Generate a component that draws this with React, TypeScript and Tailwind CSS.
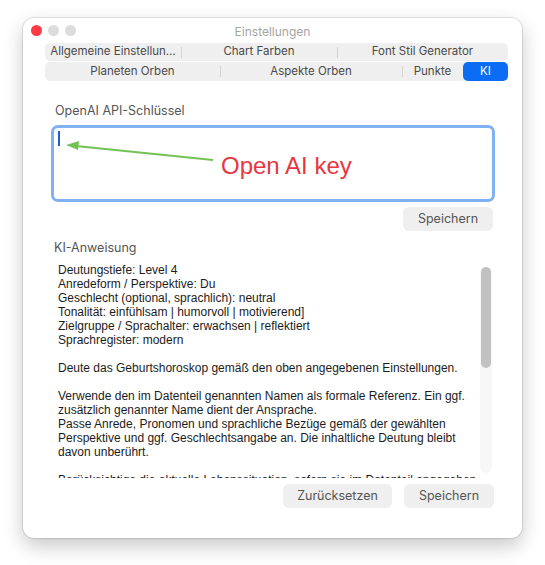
import React from "react";

const sys = "font-['Inter','Noto_Sans',sans-serif]";

function Seg({ w, label, divider, selected }: { w: number; label: string; divider?: boolean; selected?: boolean }) {
  return (
    <div className="relative flex items-center justify-center h-full" style={{ width: w }}>
      {divider && <span className="absolute left-0 top-[4px] h-[11px] w-px bg-[#d4d4d4]" />}
      {selected ? (
        <div className="w-full h-full rounded-[5px] bg-[#0b6cf4] text-white flex items-center justify-center">{label}</div>
      ) : (
        <span className="text-[#4a4a4a]">{label}</span>
      )}
    </div>
  );
}

const lines: string[] = [
  "Deutungstiefe: Level 4",
  "Anredeform / Perspektive: Du",
  "Geschlecht (optional, sprachlich): neutral",
  "Tonalität: einfühlsam | humorvoll | motivierend]",
  "Zielgruppe / Sprachalter: erwachsen | reflektiert",
  "Sprachregister: modern",
  "",
  "Deute das Geburtshoroskop gemäß den oben angegebenen Einstellungen.",
  "",
  "Verwende den im Datenteil genannten Namen als formale Referenz. Ein ggf.",
  "zusätzlich genannter Name dient der Ansprache.",
  "Passe Anrede, Pronomen und sprachliche Bezüge gemäß der gewählten",
  "Perspektive und ggf. Geschlechtsangabe an. Die inhaltliche Deutung bleibt",
  "davon unberührt.",
  "",
  "Berücksichtige die aktuelle Lebenssituation, sofern sie im Datenteil angegeben ist.",
];

export default function App() {
  return (
    <div className={`w-[545px] h-[565px] bg-white pt-[18px] pl-[23px] ${sys}`}>
      <div className="w-[499px] h-[520px] rounded-[11px] bg-white shadow-[0_0_0_1px_rgba(0,0,0,0.10),0_8px_20px_rgba(0,0,0,0.22)] flex flex-col overflow-hidden">
        {/* title bar */}
        <div className="h-[25px] grid grid-cols-[1fr_auto_1fr] items-center">
          <div className="flex items-center gap-[6px] pl-[8px]">
            <span className="w-[11px] h-[11px] rounded-full bg-[#fe3b45]" />
            <span className="w-[11px] h-[11px] rounded-full bg-[#dcdcdc]" />
            <span className="w-[11px] h-[11px] rounded-full bg-[#dcdcdc]" />
          </div>
          <div className="text-[12px] text-[#a5a5a5] pt-[2px]">Einstellungen</div>
          <div />
        </div>

        {/* tabs */}
        <div className="ml-[22px] w-[463px] flex flex-col gap-px text-[11.5px]">
          <div className="h-[18px] flex rounded-[5px] bg-[#efefef]">
            <Seg w={136} label="Allgemeine Einstellun…" />
            <Seg w={156} label="Chart Farben" divider />
            <Seg w={171} label="Font Stil Generator" divider />
          </div>
          <div className="h-[19px] flex rounded-[5px] bg-[#efefef]">
            <Seg w={175} label="Planeten Orben" />
            <Seg w={182} label="Aspekte Orben" divider />
            <Seg w={61} label="Punkte" divider />
            <Seg w={45} label="KI" selected />
          </div>
        </div>

        {/* content */}
        <div className="pl-[28px] pr-[27px] flex flex-col">
          <div className="mt-[22px] ml-[4px] text-[12.5px] leading-[16px] text-[#555]">OpenAI API-Schlüssel</div>
          <div className="mt-[6px] h-[77px] rounded-[7px] border-[3px] border-[#80b1f4] bg-white relative">
            <span className="absolute left-[4px] top-[3px] w-[2px] h-[15px] bg-[#1d5fd8]" />
            <svg className="absolute left-0 top-0" width="200" height="50" viewBox="0 0 200 50">
              <line x1="22" y1="18" x2="159" y2="32" stroke="#74c255" strokeWidth="2" />
              <polygon points="12,17 25,13 24,22" fill="#74c255" />
            </svg>
            <span className="absolute left-[167px] top-[24px] text-[24px] leading-[28px] text-[#e6363f] font-['Liberation_Sans',Arial,sans-serif]">
              Open AI key
            </span>
          </div>
          <div className="mt-[5px] mr-[2px] self-end w-[90px] h-[24px] rounded-[6px] bg-[#efefef] text-[12.5px] text-[#555] flex items-center justify-center">
            Speichern
          </div>
          <div className="mt-[9px] ml-[3px] text-[12.5px] leading-[16px] text-[#555]">KI-Anweisung</div>
          <div className="mt-[7px] h-[210px] flex items-start">
            <div className="flex-1 h-[215px] overflow-hidden pl-[7px] font-['Liberation_Sans',Arial,sans-serif] text-[12px] leading-[14px] text-[#1c1c1c] whitespace-pre">
              {lines.map((l, i) => (
                <div key={i} className="h-[14px]">{l}</div>
              ))}
            </div>
            <div className="mt-[4px] mr-[3px] w-[12px] h-[206px] rounded-full bg-[#f7f7f7] flex flex-col">
              <div className="h-[101px] w-[10px] mx-auto rounded-full bg-[#c1c1c1]" />
            </div>
          </div>
          <div className="mt-[11px] mr-[1px] self-end flex gap-[12px]">
            <div className="w-[109px] h-[24px] rounded-[6px] bg-[#efefef] text-[12.5px] text-[#555] flex items-center justify-center">
              Zurücksetzen
            </div>
            <div className="w-[90px] h-[24px] rounded-[6px] bg-[#efefef] text-[12.5px] text-[#555] flex items-center justify-center">
              Speichern
            </div>
          </div>
        </div>
      </div>
    </div>
  );
}
